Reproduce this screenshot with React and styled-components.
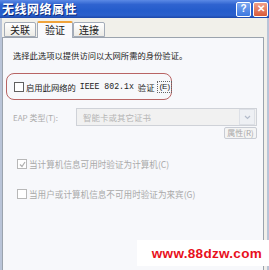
import React from 'react'
import styled, { createGlobalStyle } from 'styled-components'

const Global = createGlobalStyle`
  html, body {
    margin: 0;
    padding: 0;
    background: #ffffff;
  }
  body {
    font-family: "Noto Sans CJK SC", "Liberation Sans", sans-serif;
  }
`

const Window = styled.div`
  position: relative;
  width: 269px;
  height: 270px;
  overflow: hidden;
  background: #b9c4d8;
  display: flex;
  flex-direction: column;
`

const TitleBar = styled.div`
  height: 18px;
  flex: none;
  display: flex;
  align-items: center;
  padding: 0 1px 0 2px;
  background: linear-gradient(180deg, #5b8ae6 0%, #2f63d0 25%, #245ccb 60%, #2a60cc 85%, #1b46a8 100%);
`

const Title = styled.div`
  flex: 1;
  color: #ffffff;
  font-size: 12px;
  font-weight: bold;
  letter-spacing: 0.5px;
  line-height: 18px;
  text-shadow: 1px 1px 0 #0c2a7a;
`

const CapButton = styled.div`
  width: 13px;
  height: 13px;
  margin-left: 2px;
  border: 1px solid #ffffff;
  border-radius: 2px;
  display: flex;
  align-items: center;
  justify-content: center;
  color: #ffffff;
  font-family: "Liberation Sans", sans-serif;
  font-weight: bold;
  font-size: 10px;
  line-height: 1;
  background: ${p => (p.close ? 'linear-gradient(180deg, #f0a08a, #d95a3a)' : 'linear-gradient(180deg, #7aa6f0, #3c78e0)')};
`

const Body = styled.div`
  flex: 1;
  background: #f1f0ea;
  margin: 0 2px 0 2px;
  padding: 2px 3px 0 0;
  display: flex;
  flex-direction: column;
`

const TabStrip = styled.div`
  height: 17px;
  flex: none;
  display: flex;
  align-items: flex-end;
  padding-left: 2px;
`

const Tab = styled.div`
  height: ${p => (p.active ? 17 : 15)}px;
  width: ${p => p.w}px;
  box-sizing: border-box;
  display: flex;
  justify-content: center;
  margin-right: ${p => (p.active ? 0 : 1)}px;
  margin-bottom: ${p => (p.active ? -1 : 0)}px;
  border: 1px solid #a4acb8;
  border-bottom: ${p => (p.active ? 'none' : '1px solid #a4acb8')};
  border-top: ${p => (p.active ? '2px solid #f0a33a' : '1px solid #a4acb8')};
  border-radius: 2px 2px 0 0;
  background: ${p => (p.active ? '#fafafc' : 'linear-gradient(180deg, #ffffff, #ecebe6)')};
  font-size: 10px;
  line-height: 13px;
  color: #1c1c1c;
  position: relative;
  z-index: ${p => (p.active ? 2 : 1)};
`

const Panel = styled.div`
  flex: 1;
  border: 1px solid #9ba3ad;
  border-bottom: none;
  background: #f7f8fb;
  padding: 0 6px 0 3px;
  display: flex;
  flex-direction: column;
`

const Hint = styled.div`
  margin: 11px 0 0 7px;
  font-size: 8.3px;
  line-height: 12px;
  color: #222222;
  white-space: nowrap;
`

const Highlight = styled.div`
  margin-top: 12px;
  width: 166px;
  height: 27px;
  box-sizing: border-box;
  border: 1.5px solid #b86464;
  border-radius: 8px;
  display: flex;
  align-items: center;
  padding-left: 7px;
`

const CheckRow = styled.label`
  display: flex;
  align-items: center;
  gap: 2px;
  font-size: ${p => p.size || 8.6}px;
  line-height: 12px;
  color: ${p => (p.disabled ? '#a9a9a9' : '#222222')};
  white-space: nowrap;
`

const Box = styled.span`
  width: 8px;
  height: 8px;
  flex: none;
  border: 1px solid ${p => (p.disabled ? '#b8b8b8' : '#606060')};
  background: #ffffff;
  display: flex;
  align-items: center;
  justify-content: center;
`

const Mono = styled.span`
  font-family: "Liberation Mono", monospace;
  font-size: 8.2px;
  margin: 0 2px;
`

const Underlined = styled.span`
  display: inline-block;
  border: 1px dotted #666666;
  padding: 0 1px;
  margin-left: 1px;
  font-family: "Liberation Sans", sans-serif;
  font-size: 8px;
  line-height: 10px;
`

const EapRow = styled.div`
  margin-top: 8px;
  display: flex;
  align-items: center;
  padding-left: 7px;
`

const EapLabel = styled.div`
  width: 63px;
  font-size: 8px;
  color: #ababab;
  white-space: nowrap;
`

const Select = styled.div`
  flex: 1;
  height: 18px;
  box-sizing: border-box;
  border: 1px solid #cfd2d8;
  background: #f1f1f1;
  display: flex;
  align-items: center;
  padding-left: 6px;
  font-size: 8.5px;
  color: #b5b5b5;
`

const SelectText = styled.div`
  flex: 1;
  white-space: nowrap;
`

const Arrow = styled.div`
  width: 14px;
  height: 14px;
  margin-right: 1px;
  border: 1px solid #dde0e6;
  background: #eef0f4;
  display: flex;
  align-items: center;
  justify-content: center;
`

const ButtonRow = styled.div`
  display: flex;
  justify-content: flex-end;
  margin-top: 1px;
`

const PropButton = styled.div`
  width: 33px;
  height: 12px;
  box-sizing: border-box;
  border: 1px solid #c8ccd4;
  border-radius: 2px;
  background: #f4f4f4;
  font-size: 8px;
  line-height: 10px;
  color: #a8a8a8;
  text-align: center;
  white-space: nowrap;
`

const Option = styled.div`
  padding-left: 11px;
  margin-top: ${p => p.gap}px;
`

const Watermark = styled.div`
  position: absolute;
  left: 137px;
  top: 240px;
  width: 132px;
  height: 26px;
  background: #ffffff;
  display: flex;
  align-items: center;
  justify-content: flex-end;
  padding-right: 7px;
  box-sizing: border-box;
  color: #e8101c;
  font-family: "Liberation Sans", sans-serif;
  font-weight: bold;
  font-size: 13.5px;
  letter-spacing: 0.3px;
`

const Check = () => (
  <svg width="7" height="7" viewBox="0 0 7 7">
    <path d="M1 3.5 L3 5.5 L6 1" fill="none" stroke="#b0b0b0" strokeWidth="1.2" />
  </svg>
)

export default function App() {
  return (
    <Window>
      <Global />
      <TitleBar>
        <Title>无线网络属性</Title>
        <CapButton>?</CapButton>
        <CapButton close>✕</CapButton>
      </TitleBar>
      <Body>
        <TabStrip>
          <Tab w={32}>关联</Tab>
          <Tab active w={36}>验证</Tab>
          <Tab w={32}>连接</Tab>
        </TabStrip>
        <Panel>
          <Hint>选择此选项以提供访问以太网所需的身份验证。</Hint>
          <Highlight>
            <CheckRow size={8.3}>
              <Box />
              启用此网络的<Mono>IEEE 802.1x</Mono>验证<Underlined>(E)</Underlined>
            </CheckRow>
          </Highlight>
          <EapRow>
            <EapLabel>EAP 类型(T):</EapLabel>
            <Select>
              <SelectText>智能卡或其它证书</SelectText>
              <Arrow>
                <svg width="7" height="5" viewBox="0 0 7 5">
                  <path d="M1 1 L3.5 3.5 L6 1" fill="none" stroke="#b4bccb" strokeWidth="1.2" />
                </svg>
              </Arrow>
            </Select>
          </EapRow>
          <ButtonRow>
            <PropButton>属性(R)</PropButton>
          </ButtonRow>
          <Option gap={19}>
            <CheckRow disabled>
              <Box disabled>
                <Check />
              </Box>
              当计算机信息可用时验证为计算机(C)
            </CheckRow>
          </Option>
          <Option gap={18}>
            <CheckRow disabled>
              <Box disabled />
              当用户或计算机信息不可用时验证为来宾(G)
            </CheckRow>
          </Option>
        </Panel>
      </Body>
      <Watermark>www.88dzw.com</Watermark>
    </Window>
  )
}
